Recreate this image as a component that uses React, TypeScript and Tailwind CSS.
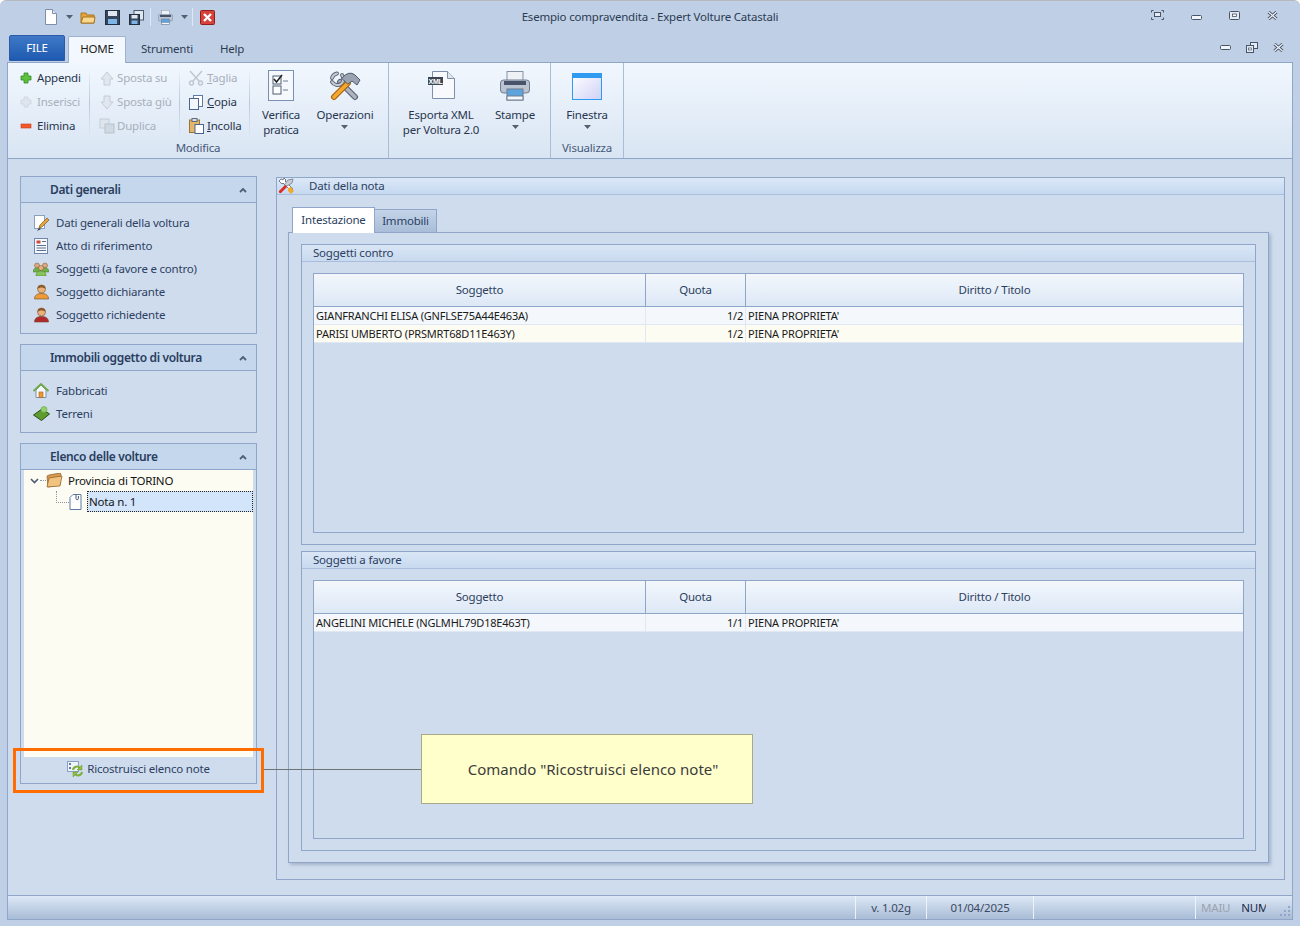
import * as React from "react"

const Chevron = () => (
  <svg width="8" height="6" viewBox="0 0 8 6" className="text-[#4f5f78]">
    <path d="M1 5 L4 2 L7 5" fill="none" stroke="currentColor" strokeWidth="1.800" />
  </svg>
)

const Caret = () => (
  <svg width="7" height="4" viewBox="0 0 7 4"><path d="M0 0h7L3.5 4z" fill="#55606f" /></svg>
)

const PlusIcon = ({ gray }: { gray?: boolean }) => (
  <svg width="12" height="12" viewBox="0 0 12 12">
    <path d="M4 1h4v3h3v4H8v3H4V8H1V4h3z" fill={gray ? "#dfe5ec" : "#5ec03c"} stroke={gray ? "#ccd4de" : "#2f8a22"} strokeWidth="0.8" />
  </svg>
)

const MinusIcon = () => (
  <svg width="12" height="12" viewBox="0 0 12 12">
    <rect x="1" y="4" width="10" height="4" fill="#ef5a28" stroke="#c73a1a" strokeWidth="0.6" />
  </svg>
)

const ArrowIcon = ({ down }: { down?: boolean }) => (
  <svg width="14" height="15" viewBox="0 0 14 15">
    <path d={down ? "M4 1h6v6h3l-6 7-6-7h3z" : "M4 14h6V8h3L7 1 1 8h3z"} fill="#e2e7ee" stroke="#c3ccd8" />
  </svg>
)

const DuplicaIcon = () => (
  <svg width="16" height="16" viewBox="0 0 16 16">
    <rect x="1" y="1" width="9" height="9" fill="#dfe5ec" stroke="#c3ccd8" />
    <rect x="6" y="6" width="9" height="9" fill="#d0d8e2" stroke="#b8c2cf" />
  </svg>
)

const ScissorsIcon = () => (
  <svg width="16" height="16" viewBox="0 0 16 16" fill="none" stroke="#c0c7d1" strokeWidth="1.5">
    <path d="M2 1l9 10M14 1L5 11" />
    <circle cx="3.5" cy="13" r="2" />
    <circle cx="12.5" cy="13" r="2" />
  </svg>
)

const CopyIcon = () => (
  <svg width="14" height="15" viewBox="0 0 14 15">
    <rect x="4.5" y="0.5" width="9" height="11" fill="#fff" stroke="#5f7aa3" />
    <rect x="0.5" y="3.5" width="9" height="11" fill="#f3f7fc" stroke="#4a6690" />
  </svg>
)

const PasteIcon = () => (
  <svg width="15" height="16" viewBox="0 0 15 16">
    <rect x="0.5" y="2" width="10" height="12.5" fill="#e4b66a" stroke="#9b7433" />
    <rect x="3" y="0.5" width="5" height="3" fill="#d8dfe8" stroke="#5d6b80" />
    <rect x="6" y="6.5" width="8.5" height="9" fill="#fff" stroke="#4a6690" />
  </svg>
)

const Small = ({ icon, label, off, u, gap }: { icon: React.ReactNode; label: string; off?: boolean; u?: boolean; gap: string }) => (
  <div className={`flex h-6 items-center whitespace-nowrap ${gap} ${off ? "text-[#a7afba]" : "text-[#27364d]"}`}>
    <span className="flex w-4 shrink-0 justify-center">{icon}</span>
    <span>
      {u ? <span className="underline">{label[0]}</span> : label[0]}
      {label.slice(1)}
    </span>
  </div>
)

const RibbonSep = () => <div className="my-[2px] h-[70px] w-px shrink-0 bg-gradient-to-b from-transparent via-[#b9c8dc] to-transparent" />

const Big = ({ w, icon, lines, caret }: { w: string; icon: React.ReactNode; lines: string[]; caret?: boolean }) => (
  <div className={`flex flex-col items-center ${w}`}>
    <div className="flex h-[36px] items-end justify-center pb-px">{icon}</div>
    <div className="mt-[5px] flex flex-col items-center leading-[15px] text-[#27364d]">
      {lines.map((l) => (
        <span key={l} className="whitespace-nowrap">{l}</span>
      ))}
      {caret && <span className="mt-[3px] flex"><Caret /></span>}
    </div>
  </div>
)

const VerificaIcon = () => (
  <svg width="26" height="31" viewBox="0 0 26 31">
    <rect x="0.5" y="0.5" width="25" height="30" fill="#f5f8fc" stroke="#7a90b3" />
    <rect x="5" y="6" width="8" height="8" fill="#fff" stroke="#4d5c72" />
    <path d="M6 9l2.5 3L14 5" fill="none" stroke="#222" strokeWidth="1.6" />
    <path d="M15 11h5M15 20h5" stroke="#6d7c92" />
    <rect x="5" y="16" width="8" height="8" fill="#fff" stroke="#4d5c72" />
  </svg>
)

const ToolsIcon = () => (
  <svg width="32" height="30" viewBox="0 0 32 30" fill="none" strokeLinecap="round">
    <path d="M11 11L26 26" stroke="#5d6878" strokeWidth="6" />
    <path d="M11 11L26 26" stroke="#aeb5c1" strokeWidth="3.600" />
    <path d="M8 2.500a6.500 6.500 0 0 0-5 4.500M3 11a6.500 6.500 0 0 0 9 2 6.500 6.500 0 0 0 1-9" stroke="#5d6878" strokeWidth="4" />
    <path d="M8 2.500a6.500 6.500 0 0 0-5 4.500M3 11a6.500 6.500 0 0 0 9 2 6.500 6.500 0 0 0 1-9" stroke="#c6ccd5" strokeWidth="2" />
    <path d="M5 26L19 12" stroke="#a8630e" strokeWidth="6" />
    <path d="M5 26L19 12" stroke="#f5a82e" strokeWidth="3.800" />
    <path d="M13 7Q20-1 26 4l5 5-3 5-5-4-4 3z" fill="#9aa3b1" stroke="#4f5a6a" />
  </svg>
)

const XmlIcon = () => (
  <svg width="27" height="28" viewBox="0 0 27 28" className="mb-[2px]">
    <path d="M4.5.5h15l7 7v20h-22z" fill="#f7f9fc" stroke="#7d8fac" />
    <path d="M19.5.5v7h7" fill="#dfe6f0" stroke="#7d8fac" />
    <rect x="0" y="6" width="15" height="8" fill="#3d4654" />
    <text x="7.5" y="12.6" textAnchor="middle" fontSize="7" fontWeight="700" fill="#fff" fontFamily="Liberation Sans, sans-serif">XML</text>
  </svg>
)

const PrinterIcon = ({ s = 30 }: { s?: number }) => (
  <svg width={s} height={s} viewBox="0 0 30 30">
    <rect x="7" y="0.5" width="16" height="10" fill="#eef1f6" stroke="#8593a8" />
    <rect x="0.5" y="9" width="29" height="13" rx="3" fill="#b9c3d1" stroke="#6f7c90" />
    <rect x="4" y="10" width="22" height="4" fill="#46536a" />
    <rect x="7" y="18" width="16" height="11" fill="#5ea4dc" stroke="#6f7c90" />
    <rect x="7" y="25" width="16" height="4" fill="#f4f7fb" stroke="#6f7c90" />
  </svg>
)

const WindowIcon = () => (
  <svg width="30" height="27" viewBox="0 0 30 27" className="mb-px">
    <defs>
      <linearGradient id="win" x1="0" y1="0" x2="1" y2="1">
        <stop offset="0" stopColor="#ffffff" />
        <stop offset="1" stopColor="#cfd2f7" />
      </linearGradient>
    </defs>
    <rect x="0.5" y="0.5" width="29" height="26" fill="url(#win)" stroke="#2f9bf0" />
    <rect x="1" y="1" width="28" height="4" fill="#2f9bf0" />
  </svg>
)

const QaDoc = () => (
  <svg width="14" height="16" viewBox="0 0 14 16">
    <path d="M1.5.5h7l4 4v11h-11z" fill="#fff" stroke="#7d8fac" />
    <path d="M8.5.5v4h4" fill="#e4eaf2" stroke="#7d8fac" />
  </svg>
)

const QaFolder = () => (
  <svg width="16" height="13" viewBox="0 0 16 13">
    <path d="M1 2h5l1 2h7v8H1z" fill="#e5a53c" stroke="#a8741f" />
    <path d="M1 12l2-6h12l-1 6z" fill="#fbd88f" stroke="#a8741f" />
  </svg>
)

const QaSave = () => (
  <svg width="15" height="15" viewBox="0 0 15 15">
    <rect x="0.5" y="0.5" width="14" height="14" fill="#36465c" stroke="#232e3e" />
    <rect x="3" y="1" width="9" height="5" fill="#dfe6ef" />
    <rect x="3" y="9" width="9" height="5" fill="#7fb5e6" />
  </svg>
)

const QaSaveAll = () => (
  <svg width="15" height="15" viewBox="0 0 15 15">
    <rect x="5" y="0.5" width="9.5" height="9.5" fill="#dfe6ef" stroke="#485970" />
    <rect x="0.5" y="4.5" width="10" height="10" fill="#36465c" stroke="#232e3e" />
    <rect x="2.5" y="5" width="6" height="3.5" fill="#dfe6ef" />
    <rect x="2.5" y="10.5" width="6" height="3.5" fill="#7fb5e6" />
  </svg>
)

const QaClose = () => (
  <svg width="15" height="15" viewBox="0 0 15 15">
    <rect x="0.5" y="0.5" width="14" height="14" rx="1" fill="#d8403a" stroke="#8f1f1b" />
    <path d="M4 4l7 7M11 4l-7 7" stroke="#fff" strokeWidth="2.4" />
  </svg>
)

const QaSep = ({ ml }: { ml: string }) => <div className={`h-[18px] w-px bg-[#dfe8f3] ${ml}`} />

const WinMin = () => (
  <svg width="11" height="5" viewBox="0 0 11 5">
    <rect x="0.5" y="0.5" width="10" height="4" rx="1" fill="#f2f5fa" stroke="#485468" />
  </svg>
)

const WinMax = () => (
  <svg width="11" height="9" viewBox="0 0 11 9" className="mb-[4px]">
    <rect x="0.5" y="0.5" width="10" height="8" rx="1" fill="#e4ebf5" stroke="#485468" />
    <rect x="3.5" y="3" width="4" height="2.5" fill="#fff" stroke="#485468" strokeWidth="0.8" />
  </svg>
)

const WinRestore = () => (
  <svg width="12" height="11" viewBox="0 0 12 11">
    <rect x="4.5" y="0.5" width="7" height="6" fill="#e4ebf5" stroke="#485468" />
    <rect x="0.5" y="3.5" width="7" height="7" fill="#e4ebf5" stroke="#485468" />
    <rect x="2.5" y="6" width="3" height="2" fill="#fff" stroke="#485468" strokeWidth="0.7" />
  </svg>
)

const WinX = ({ up }: { up?: boolean }) => (
  <svg width="11" height="9" viewBox="0 0 11 9" className={up ? "mb-[4px]" : ""}>
    <path d="M1.5 1l8 7M9.5 1l-8 7" stroke="#485468" strokeWidth="3" />
    <path d="M1.5 1l8 7M9.5 1l-8 7" stroke="#f2f5fa" strokeWidth="1.2" />
  </svg>
)

const WinFull = () => (
  <svg width="13" height="10" viewBox="0 0 13 10" fill="none" stroke="#485468" className="mb-[4px]">
    <path d="M.5 2.500v-2h2M10.500.5h2v2M12.500 7.500v2h-2M2.500 9.500h-2v-2" />
    <rect x="3.500" y="2.500" width="6" height="4" fill="#e4ebf5" />
  </svg>
)

const NoteEditIcon = () => (
  <svg width="16" height="16" viewBox="0 0 16 16">
    <rect x="1.5" y="0.5" width="10" height="13" fill="#fff" stroke="#8ba0bf" />
    <path d="M6 13l1-3 7-7 2 2-7 7z" fill="#e8a33a" stroke="#7a5a20" strokeWidth="0.7" />
    <path d="M4 16l2-3 2 1z" fill="#333" />
  </svg>
)

const ListIcon = () => (
  <svg width="14" height="16" viewBox="0 0 14 16">
    <rect x="0.5" y="0.5" width="13" height="15" fill="#f5f8fc" stroke="#6f86aa" />
    <rect x="2.5" y="2.5" width="4" height="3" fill="#d14b3a" />
    <path d="M8 3.500h4M2.500 7.500h9.500M2.500 10h9.500M2.500 12.500h9.500" stroke="#5b6f90" />
  </svg>
)

const PersonIcon = ({ body, head = "#e9b27a", hair = "#8a5a2b" }: { body: string; head?: string; hair?: string }) => (
  <svg width="15" height="16" viewBox="0 0 15 16">
    <path d="M0.500 15c0-4 3-5.500 7-5.500s7 1.500 7 5.500z" fill={body} stroke="#6b4a2a" strokeWidth="0.6" />
    <circle cx="7.500" cy="5" r="4" fill={head} stroke="#7a5230" strokeWidth="0.6" />
    <path d="M3.500 5a4 4 0 0 1 8 0c-2-2-6-2-8 0z" fill={hair} />
  </svg>
)

const GroupIcon = () => (
  <svg width="16" height="14" viewBox="0 0 16 14">
    <circle cx="4" cy="3.500" r="2.500" fill="#d9a878" stroke="#7a5230" strokeWidth="0.5" />
    <circle cx="12" cy="3.500" r="2.500" fill="#d9a878" stroke="#7a5230" strokeWidth="0.5" />
    <path d="M0 10c0-3 1.500-4 4-4s4 1 4 4zM8 10c0-3 1.500-4 4-4s4 1 4 4z" fill="#70b04a" stroke="#44772b" strokeWidth="0.5" />
    <circle cx="8" cy="6" r="2.500" fill="#e9b27a" stroke="#7a5230" strokeWidth="0.5" />
    <path d="M3 14c0-4 2-5 5-5s5 1 5 5z" fill="#86c45a" stroke="#44772b" strokeWidth="0.5" />
  </svg>
)

const HouseIcon = () => (
  <svg width="16" height="15" viewBox="0 0 16 15">
    <path d="M3 7v7.500h10V7L8 2z" fill="#f4f7fb" stroke="#7f8fa8" />
    <path d="M0.500 8L8 1l7.500 7" fill="none" stroke="#6cab46" strokeWidth="1.800" />
    <rect x="6" y="9" width="4" height="5.500" fill="#ec9a2c" stroke="#a4671b" strokeWidth="0.6" />
  </svg>
)

const TerrainIcon = () => (
  <svg width="17" height="15" viewBox="0 0 17 15">
    <path d="M0.500 9L9 3l7.500 5-8 6.500z" fill="#5f9c2f" stroke="#2b4d14" />
    <circle cx="11" cy="3.500" r="3" fill="#93d06a" stroke="#5c9a3a" strokeWidth="0.5" />
  </svg>
)

const FolderOpenIcon = () => (
  <svg width="17" height="15" viewBox="0 0 17 15">
    <path d="M1 3l2-1 11-2 1 1-1 11-12 2z" fill="#d69a52" stroke="#8e5b20" strokeWidth="0.7" />
    <path d="M1 14L3 5l13-2-2 10z" fill="#f2c37f" stroke="#8e5b20" strokeWidth="0.7" />
  </svg>
)

const NotaIcon = () => (
  <svg width="13" height="16" viewBox="0 0 13 16">
    <path d="M1 3.500l3-3h8v15H1z" fill="#fff" stroke="#5d7ba6" />
    <path d="M7 .5v4a1.200 1.200 0 0 0 2.400 0V2" fill="none" stroke="#45597a" />
  </svg>
)

const RebuildIcon = () => (
  <svg width="16" height="16" viewBox="0 0 16 16">
    <rect x="0.500" y="0.500" width="11" height="10" fill="#f0f5fb" stroke="#8ba0bf" />
    <rect x="2" y="2" width="2" height="2" fill="#5d7ba6" />
    <rect x="2" y="6" width="2" height="2" fill="#5d7ba6" />
    <path d="M6 9a4 4 0 0 1 7-2" fill="none" stroke="#7fb03a" strokeWidth="2" />
    <path d="M15 4v5h-5z" fill="#8fbf3f" stroke="#5a8a25" strokeWidth="0.4" />
    <path d="M15 11a4 4 0 0 1-7 2" fill="none" stroke="#7fb03a" strokeWidth="2" />
    <path d="M6 16v-5h5z" fill="#8fbf3f" stroke="#5a8a25" strokeWidth="0.4" />
  </svg>
)

const NotaToolsIcon = () => (
  <svg width="17" height="16" viewBox="0 0 17 16">
    <path d="M3 1L1 3l3 3 1-1 8 8 2-2-8-8 1-1-2-2-1 2z" fill="#fff" stroke="#55606f" strokeWidth="0.8" />
    <path d="M9 8l-3-1 4-5 5-1-1 4z" fill="#c9ced6" stroke="#55606f" strokeWidth="0.6" />
    <path d="M1 13l6-6 2 2-6 6a1.500 1.500 0 0 1-2-2z" fill="#e02b20" />
    <path d="M10 10l3-1 3 4-3 3-3-3z" fill="#f2a72e" />
  </svg>
)

const PanelHeader = ({ title }: { title: string }) => (
  <div className="flex h-[26px] shrink-0 items-center border-b border-[#8fa6c8] bg-[#c4d7ed] pl-[29px] pr-[9px]">
    <span className="flex-1 text-[12px] font-semibold tracking-[-0.35px] text-[#2a3d5d]">{title}</span>
    <Chevron />
  </div>
)

const TaskRow = ({ icon, label }: { icon: React.ReactNode; label: string }) => (
  <div className="flex h-[23px] items-center gap-[6px] text-[#2c3f61]">
    <span className="flex w-[18px] justify-center">{icon}</span>
    <span>{label}</span>
  </div>
)

const headCell = "flex items-center justify-center border-r border-[#8fa6c8] text-[#2c3f61]"

const GridBlock = ({ title, rows, grow }: { title: string; rows: { s: string; q: string; d: string; bg: string }[]; grow: string }) => (
  <div className={`flex flex-col border border-[#8fa6c8] ${grow}`}>
    <div className="flex h-[17px] shrink-0 items-center border-b border-[#a9bedb] bg-gradient-to-b from-[#d9e6f6] to-[#c9daef] pl-[11px] text-[#2c3f61]">
      {title}
    </div>
    <div className="m-[11px] flex flex-1 flex-col border border-[#8fa6c8]">
      <div className="flex h-[33px] border-b border-[#8fa6c8] bg-gradient-to-b from-[#f3f7fc] to-[#dde8f6]">
        <div className={`${headCell} w-[332px]`}>Soggetto</div>
        <div className={`${headCell} w-[100px]`}>Quota</div>
        <div className="flex flex-1 items-center justify-center text-[#2c3f61]">Diritto / Titolo</div>
      </div>
      {rows.map((r) => (
        <div key={r.s} className={`flex h-[18px] items-center border-b border-[#dfe8f3] text-[11px] text-[#1a1a1a] ${r.bg}`}>
          <div className="h-full w-[332px] truncate border-r border-[#dfe8f3] pl-[2px] leading-[17px]">{r.s}</div>
          <div className="h-full w-[100px] border-r border-[#dfe8f3] pr-[2px] text-right leading-[17px]">{r.q}</div>
          <div className="h-full flex-1 pl-[2px] leading-[17px]">{r.d}</div>
        </div>
      ))}
    </div>
  </div>
)

const StatusCell = ({ w, children }: { w: string; children: React.ReactNode }) => (
  <div className={`flex h-full items-center justify-center border-l border-[#eef3fa] ${w}`}>{children}</div>
)

export default function App() {
  return (
    <div className="relative flex h-[926px] w-[1300px] flex-col overflow-hidden rounded-t-[6px] border-t border-[#b5b9bd] bg-[#bfd0e6] font-['Open_Sans','Noto_Sans',sans-serif] text-[11.5px] tracking-[-0.2px]">
      {/* titolo */}
      <div className="relative flex h-[34px] shrink-0 items-center pb-[2px] pl-[44px] pr-[22px]">
        <QaDoc />
        <span className="ml-[8px] mr-[7px] flex"><Caret /></span>
        <QaFolder />
        <span className="ml-[9px] flex"><QaSave /></span>
        <span className="ml-[9px] flex"><QaSaveAll /></span>
        <QaSep ml="ml-[6px]" />
        <span className="ml-[7px] flex"><PrinterIcon s={15} /></span>
        <span className="ml-[8px] flex"><Caret /></span>
        <QaSep ml="ml-[4px]" />
        <span className="ml-[7px] flex"><QaClose /></span>
        <div className="absolute inset-x-0 text-center text-[#2c3b52]">Esempio compravendita - Expert Volture Catastali</div>
        <div className="ml-auto flex items-center gap-[27px]">
          <WinFull />
          <WinMin />
          <WinMax />
          <WinX up />
        </div>
      </div>
      {/* tab */}
      <div className="relative z-10 flex h-[27px] shrink-0 items-start pl-[9px] text-[#2c3b52]">
        <div className="flex h-[26px] w-[56px] items-center justify-center rounded-t-[2px] border border-[#2a5aa8] bg-gradient-to-b from-[#3f78c6] to-[#1d5ab0] text-white">FILE</div>
        <div className="relative top-px ml-[3px] flex h-[27px] w-[58px] items-center justify-center rounded-t-[2px] border border-b-0 border-[#9fb3d1] bg-[#f3f8fe] pb-[2px] text-[#1c1c1c]">HOME</div>
        <div className="ml-[15px] flex h-[27px] items-center">Strumenti</div>
        <div className="ml-[27px] flex h-[27px] items-center">Help</div>
        <div className="ml-auto mr-[16px] flex h-[24px] items-center gap-[15px]">
          <WinMin />
          <WinRestore />
          <WinX />
        </div>
      </div>
      {/* ribbon */}
      <div className="mx-[7px] flex h-[97px] shrink-0 border border-[#8fa6c8] bg-gradient-to-b from-[#f1f7fe] to-[#d9e5f3]">
        <div className="flex w-[381px] flex-col border-r border-[#aabdd6]">
          <div className="flex h-[75px] pl-[10px] pt-[3px]">
            <div className="flex w-[71px] flex-col">
              <Small gap="gap-[3px]" icon={<PlusIcon />} label="Appendi" />
              <Small gap="gap-[3px]" icon={<PlusIcon gray />} label="Inserisci" off />
              <Small gap="gap-[3px]" icon={<MinusIcon />} label="Elimina" />
            </div>
            <RibbonSep />
            <div className="flex w-[89px] flex-col pl-[9px]">
              <Small gap="gap-[2px]" icon={<ArrowIcon />} label="Sposta su" off />
              <Small gap="gap-[2px]" icon={<ArrowIcon down />} label="Sposta giù" off />
              <Small gap="gap-[2px]" icon={<DuplicaIcon />} label="Duplica" off />
            </div>
            <RibbonSep />
            <div className="flex w-[69px] flex-col pl-[8px]">
              <Small gap="gap-[3px]" icon={<ScissorsIcon />} label="Taglia" off u />
              <Small gap="gap-[3px]" icon={<CopyIcon />} label="Copia" u />
              <Small gap="gap-[3px]" icon={<PasteIcon />} label="Incolla" u />
            </div>
            <RibbonSep />
            <Big w="w-[62px]" icon={<VerificaIcon />} lines={["Verifica", "pratica"]} />
            <Big w="w-[66px]" icon={<ToolsIcon />} lines={["Operazioni"]} caret />
          </div>
          <div className="flex flex-1 items-center justify-center pb-[1px] text-[#46597a]">Modifica</div>
        </div>
        <div className="flex w-[162px] border-r border-[#aabdd6] pl-[13px] pt-[3px]">
          <Big w="w-[78px]" icon={<XmlIcon />} lines={["Esporta XML", "per Voltura 2.0"]} />
          <Big w="w-[70px]" icon={<PrinterIcon />} lines={["Stampe"]} caret />
        </div>
        <div className="flex w-[73px] flex-col items-center border-r border-[#aabdd6] pt-[3px]">
          <Big w="w-full" icon={<WindowIcon />} lines={["Finestra"]} caret />
          <div className="mb-px mt-auto flex h-[19px] items-center text-[#46597a]">Visualizza</div>
        </div>
      </div>
      {/* contenuto */}
      <div className="mx-[7px] flex flex-1 gap-[19px] border-x border-[#8fa6c8] bg-[#cfdcee] pl-[12px] pt-[17px]">
        <div className="flex w-[237px] flex-col gap-[10px]">
          <div className="h-[158px] border border-[#8fa6c8]">
            <PanelHeader title="Dati generali" />
            <div className="pl-[11px] pt-[8px]">
              <TaskRow icon={<NoteEditIcon />} label="Dati generali della voltura" />
              <TaskRow icon={<ListIcon />} label="Atto di riferimento" />
              <TaskRow icon={<GroupIcon />} label="Soggetti (a favore e contro)" />
              <TaskRow icon={<PersonIcon body="#ee9b37" />} label="Soggetto dichiarante" />
              <TaskRow icon={<PersonIcon body="#b3282d" />} label="Soggetto richiedente" />
            </div>
          </div>
          <div className="h-[89px] border border-[#8fa6c8]">
            <PanelHeader title="Immobili oggetto di voltura" />
            <div className="pl-[11px] pt-[8px]">
              <TaskRow icon={<HouseIcon />} label="Fabbricati" />
              <TaskRow icon={<TerrainIcon />} label="Terreni" />
            </div>
          </div>
          <div className="flex h-[341px] flex-col border border-[#8fa6c8]">
            <PanelHeader title="Elenco delle volture" />
            <div className="mx-[3px] flex-1 bg-[#fdfcf3] text-[#141414]">
              <div className="flex h-[21px] items-center pl-[6px]">
                <svg width="9" height="6" viewBox="0 0 9 6"><path d="M1 1l3.500 3.500L8 1" fill="none" stroke="#4a5a72" strokeWidth="1.600" /></svg>
                <span className="ml-px w-[6px] border-t border-dotted border-[#8b95a3]" />
                <FolderOpenIcon />
                <span className="ml-[5px]">Provincia di TORINO</span>
              </div>
              <div className="flex h-[21px] items-center pl-[32px]">
                <span className="mb-[9px] h-[12px] w-[13px] border-b border-l border-dotted border-[#8b95a3]" />
                <NotaIcon />
                <div className="ml-[5px] flex h-full flex-1 items-center border border-dotted border-[#222] bg-[#d3e5fb] pl-px">Nota n. 1</div>
              </div>
            </div>
            <div className="flex h-[26px] shrink-0 items-center justify-center gap-[4px] pb-[2px] text-[#2c3f61]">
              <RebuildIcon />
              <span>Ricostruisci elenco note</span>
            </div>
          </div>
        </div>
        <div className="mb-[15px] mt-px flex w-[1009px] flex-col border border-[#8fa6c8]">
          <div className="flex h-[17px] shrink-0 items-center gap-[14px] border-b border-[#a9bedb] bg-gradient-to-b from-[#dbe8f8] to-[#c6d9f0] pl-[1px] text-[#2c3f61]">
            <NotaToolsIcon />
            <span>Dati della nota</span>
          </div>
          <div className="flex flex-1 flex-col pb-[16px] pl-[11px] pr-[15px] pt-[11px]">
            <div className="relative top-px z-10 flex h-[26px] shrink-0 items-end pl-[4px]">
              <div className="flex h-[26px] w-[83px] items-center justify-center border border-b-0 border-[#8fa6c8] bg-white pb-[2px] text-[#2c3f61]">Intestazione</div>
              <div className="flex h-[24px] w-[62px] items-center justify-center border border-l-0 border-[#8fa6c8] bg-gradient-to-b from-[#c4d4e9] to-[#a8bdd8] text-[#2c3f61]">Immobili</div>
            </div>
            <div className="flex flex-1 flex-col gap-[6px] border border-[#8fa6c8] px-[12px] pb-[11px] pt-[11px] shadow-[2px_2px_3px_rgba(90,110,140,0.35)]">
              <GridBlock
                title="Soggetti contro"
                grow="h-[301px] shrink-0"
                rows={[
                  { s: "GIANFRANCHI ELISA (GNFLSE75A44E463A)", q: "1/2", d: "PIENA PROPRIETA'", bg: "bg-[#f4f7fb]" },
                  { s: "PARISI UMBERTO (PRSMRT68D11E463Y)", q: "1/2", d: "PIENA PROPRIETA'", bg: "bg-[#fdfcf3]" },
                ]}
              />
              <GridBlock
                title="Soggetti a favore"
                grow="flex-1"
                rows={[{ s: "ANGELINI MICHELE (NGLMHL79D18E463T)", q: "1/1", d: "PIENA PROPRIETA'", bg: "bg-[#f4f7fb]" }]}
              />
            </div>
          </div>
        </div>
      </div>
      {/* stato */}
      <div className="mx-[7px] mb-[6px] flex h-[25px] shrink-0 items-center border border-[#8fa6c8] bg-gradient-to-b from-[#dde8f6] to-[#a9bcd6] text-[#3a4a63]">
        <div className="flex-1" />
        <StatusCell w="w-[71px]">v. 1.02g</StatusCell>
        <StatusCell w="w-[107px]">01/04/2025</StatusCell>
        <div className="h-full w-[162px] border-l border-[#eef3fa]" />
        <div className="flex h-full w-[97px] items-center border-l border-[#eef3fa] pl-[5px]">
          <span className="text-[#9aa3af]">MAIU</span>
          <span className="ml-[11px] w-[25px] overflow-hidden whitespace-nowrap text-[#1b2a4a]">NUM</span>
          <svg width="12" height="12" viewBox="0 0 12 12" className="ml-[13px] mt-[6px]" fill="#8fa6c8">
            <rect x="9" y="1" width="2" height="2" />
            <rect x="5" y="5" width="2" height="2" />
            <rect x="9" y="5" width="2" height="2" />
            <rect x="1" y="9" width="2" height="2" />
            <rect x="5" y="9" width="2" height="2" />
            <rect x="9" y="9" width="2" height="2" />
          </svg>
        </div>
      </div>
      {/* nota sopra lo screenshot */}
      <div className="absolute left-[13px] top-[747px] h-[45px] w-[251px] border-[3px] border-[#ff6d00]" />
      <div className="absolute left-[264px] top-[768px] h-px w-[157px] bg-[#6f7378]" />
      <div className="absolute left-[421px] top-[733px] flex h-[70px] w-[332px] items-center justify-center border border-[#a9a98a] bg-[#ffffcc] pl-[12px] text-[15px] tracking-normal text-[#3c3c3c]">
        Comando "Ricostruisci elenco note"
      </div>
    </div>
  )
}
